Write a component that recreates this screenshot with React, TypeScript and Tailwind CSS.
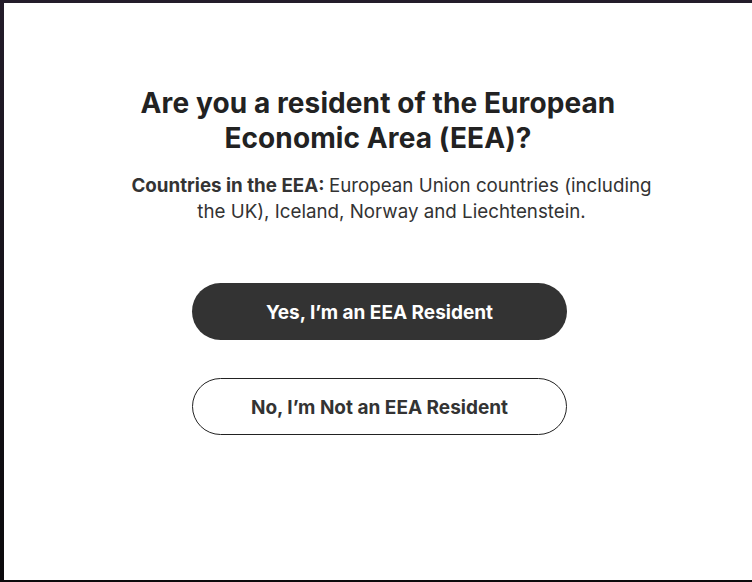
export default function App() {
  return (
    <div className="h-[582px] w-full bg-gradient-to-b from-[#231c2a] to-[#0b0a0c] pt-[3px] pl-[4px] pb-[2px]">
      <div
        className="h-full w-full bg-white flex flex-col items-center pt-[83px] text-center"
        style={{ fontFamily: "Inter, 'Noto Sans', sans-serif" }}
      >
        <h1 className="max-w-[520px] text-[28px] leading-[35px] font-bold text-[#222] tracking-[0.1px]">
          Are you a resident of the European Economic Area (EEA)?
        </h1>
        <p className="mt-[17px] ml-[27px] max-w-[535px] text-[18.75px] leading-[26px] text-[#333]">
          <span className="font-bold">Countries in the EEA: </span>
          <span>European Union countries (including the UK), Iceland, Norway and Liechtenstein.</span>
        </p>
        <div className="mt-[58px] ml-[3px] flex flex-col gap-[38px]">
          <button className="h-[57px] w-[375px] rounded-full bg-[#333] pt-[3px] text-white text-[19px] font-bold">
            Yes, I’m an EEA Resident
          </button>
          <button className="h-[57px] w-[375px] rounded-full border border-[#222] bg-white pt-[3px] text-[#333] text-[19px] font-bold">
            No, I’m Not an EEA Resident
          </button>
        </div>
      </div>
    </div>
  );
}
